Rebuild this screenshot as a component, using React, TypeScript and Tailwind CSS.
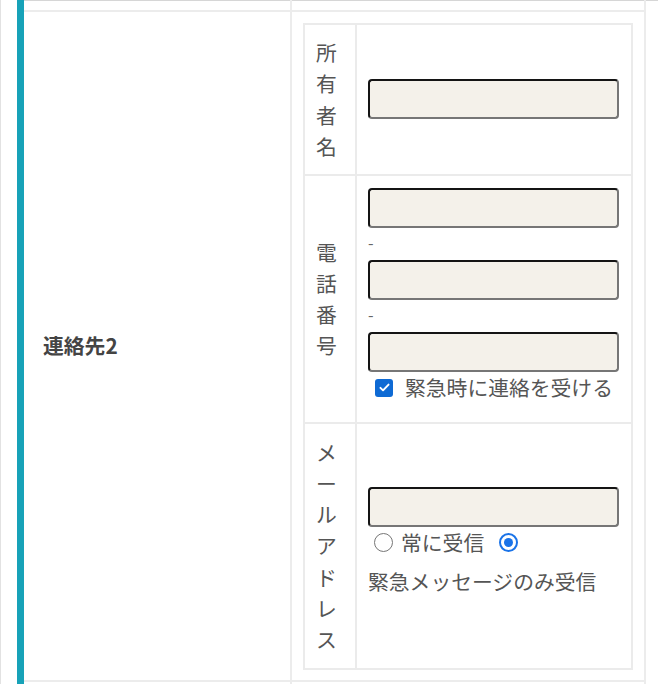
import React from 'react';

const Field = () => (
  <input
    type="text"
    className="block w-[251px] h-[40px] rounded-[4px] border-2 border-t-[#141414] border-l-[#141414] border-r-[#767676] border-b-[#767676] bg-[#f4f1ea] outline-none"
  />
);

const Dash = () => (
  <div className="h-[32px] text-[16px] leading-[29px] text-[#666]">-</div>
);

const VLabel = ({ text }: { text: string }) => (
  <div className="w-[52px] shrink-0 border-r-2 border-[#ebebeb] px-[11px] py-[12px] flex flex-col justify-center">
    {Array.from(text).map((c, i) => (
      <span key={i} className="block leading-[31.25px]">
        {c}
      </span>
    ))}
  </div>
);

export default function App() {
  return (
    <div className="w-[658px] h-[684px] bg-white flex overflow-hidden text-[#555] text-[20.8px] font-['Noto_Sans_CJK_JP','Noto_Sans',sans-serif]">
      <div className="w-[17px] shrink-0 border-l border-[#e2e2e2]" />
      <div className="w-[7px] shrink-0 bg-[#17a2b8]" />

      {/* label column */}
      <div className="w-[266px] shrink-0 flex flex-col">
        <div className="h-[1px] bg-[#d6d6d6]" />
        <div className="h-[9px]" />
        <div className="h-[2px] bg-[#ececec]" />
        <div className="flex-1 flex items-center pl-[19px]">
          <span className="font-bold text-[#444]">連絡先2</span>
        </div>
        <div className="h-[2px] bg-[#ececec]" />
        <div className="h-[2px]" />
      </div>

      <div className="w-[2px] shrink-0 bg-[#ececec]" />

      {/* value column */}
      <div className="w-[352px] shrink-0 flex flex-col">
        <div className="h-[1px] bg-[#d6d6d6]" />
        <div className="h-[9px]" />
        <div className="h-[2px] bg-[#ececec]" />
        <div className="flex-1 pt-[11px] pb-[10px] px-[11px]">
          <div className="border-2 border-[#ebebeb] flex flex-col">
            {/* 所有者名 */}
            <div className="flex border-b-2 border-[#ebebeb]">
              <VLabel text="所有者名" />
              <div className="flex-1 flex items-center px-[11px] pb-[2px]">
                <Field />
              </div>
            </div>

            {/* 電話番号 */}
            <div className="flex border-b-2 border-[#ebebeb]">
              <VLabel text="電話番号" />
              <div className="flex-1 flex flex-col px-[11px] pt-[12px] pb-[12px]">
                <Field />
                <Dash />
                <Field />
                <Dash />
                <Field />
                <div className="flex items-center h-[31px] mb-[7px]">
                  <span className="ml-[7px] w-[18px] h-[18px] rounded-[3px] bg-[#0e6ad4] flex items-center justify-center">
                    <svg viewBox="0 0 16 16" className="w-[13px] h-[13px]">
                      <path d="M3 8.5l3.2 3L13 4.5" fill="none" stroke="#fff" strokeWidth="2.4" strokeLinecap="round" strokeLinejoin="round" />
                    </svg>
                  </span>
                  <span className="ml-[12px] leading-[31.25px]">緊急時に連絡を受ける</span>
                </div>
              </div>
            </div>

            {/* メールアドレス */}
            <div className="flex min-h-[244px]">
              <VLabel text="メールアドレス" />
              <div className="flex-1 flex flex-col justify-center px-[11px] pt-[12px] pb-[20px]">
                <Field />
                <div className="flex items-start h-[39px]">
                  <span className="mt-[6px] ml-[6px] w-[19px] h-[19px] rounded-full border-[1.5px] border-[#767676] bg-white shrink-0" />
                  <span className="ml-[8px] leading-[31.25px]">常に受信</span>
                  <span className="mt-[6px] ml-[15px] w-[19px] h-[19px] rounded-full border-2 border-[#1a73e8] bg-white flex items-center justify-center shrink-0">
                    <span className="w-[9px] h-[9px] rounded-full bg-[#1a73e8]" />
                  </span>
                </div>
                <div className="leading-[31.25px]">緊急メッセージのみ受信</div>
              </div>
            </div>
          </div>
        </div>
        <div className="h-[2px] bg-[#ececec]" />
        <div className="h-[2px]" />
      </div>

      <div className="w-[2px] shrink-0 bg-[#ececec]" />
      <div className="flex-1 flex flex-col">
        <div className="h-[1px] bg-[#d6d6d6]" />
      </div>
    </div>
  );
}
